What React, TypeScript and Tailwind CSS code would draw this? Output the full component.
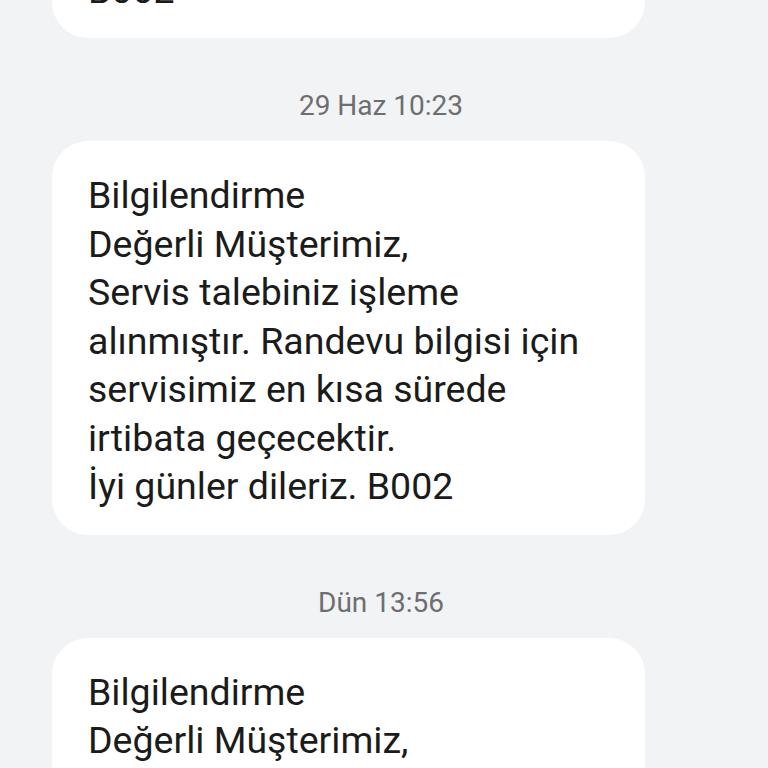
const message = [
  'Bilgilendirme',
  'Değerli Müşterimiz,',
  'Servis talebiniz işleme',
  'alınmıştır. Randevu bilgisi için',
  'servisimiz en kısa sürede',
  'irtibata geçecektir.',
  'İyi günler dileriz. B002',
]

// the earlier message wraps its code onto its own line
const earlier = [
  'Bilgilendirme',
  'Değerli Müşterimiz,',
  'Servis talebiniz işleme',
  'alınmıştır. Randevu bilgisi için',
  'servisimiz en kısa sürede',
  'irtibata geçecektir.',
  'İyi günler dileriz.',
  'B002',
]

function Bubble({ lines, className = '' }: { lines: string[]; className?: string }) {
  return (
    <div className={`ml-[52px] w-[593px] rounded-[36px] bg-white pl-[36px] pr-[20px] pt-[30px] pb-[24px] ${className}`}>
      {lines.map((line, i) => (
        <div key={i} className="whitespace-nowrap text-[37.5px] leading-[48.5px] text-[#1b1b1b]">
          {line}
        </div>
      ))}
    </div>
  )
}

function Stamp({ label }: { label: string }) {
  return (
    <div className="pt-[53px] pb-[20px] pr-[6px] text-center text-[28px] leading-[30px] text-[#6e6e70]">
      {label}
    </div>
  )
}

export default function App() {
  return (
    <div
      className="h-[768px] w-[768px] overflow-hidden bg-[#f2f3f5]"
      style={{ fontFamily: 'Roboto, "Noto Sans", sans-serif' }}
    >
      <div className="flex flex-col">
        {/* scrolled partly off the top */}
        <Bubble lines={earlier} className="-mt-[404px]" />
        <Stamp label="29 Haz 10:23" />
        <Bubble lines={message} />
        <Stamp label="Dün 13:56" />
        <Bubble lines={message} />
      </div>
    </div>
  )
}
